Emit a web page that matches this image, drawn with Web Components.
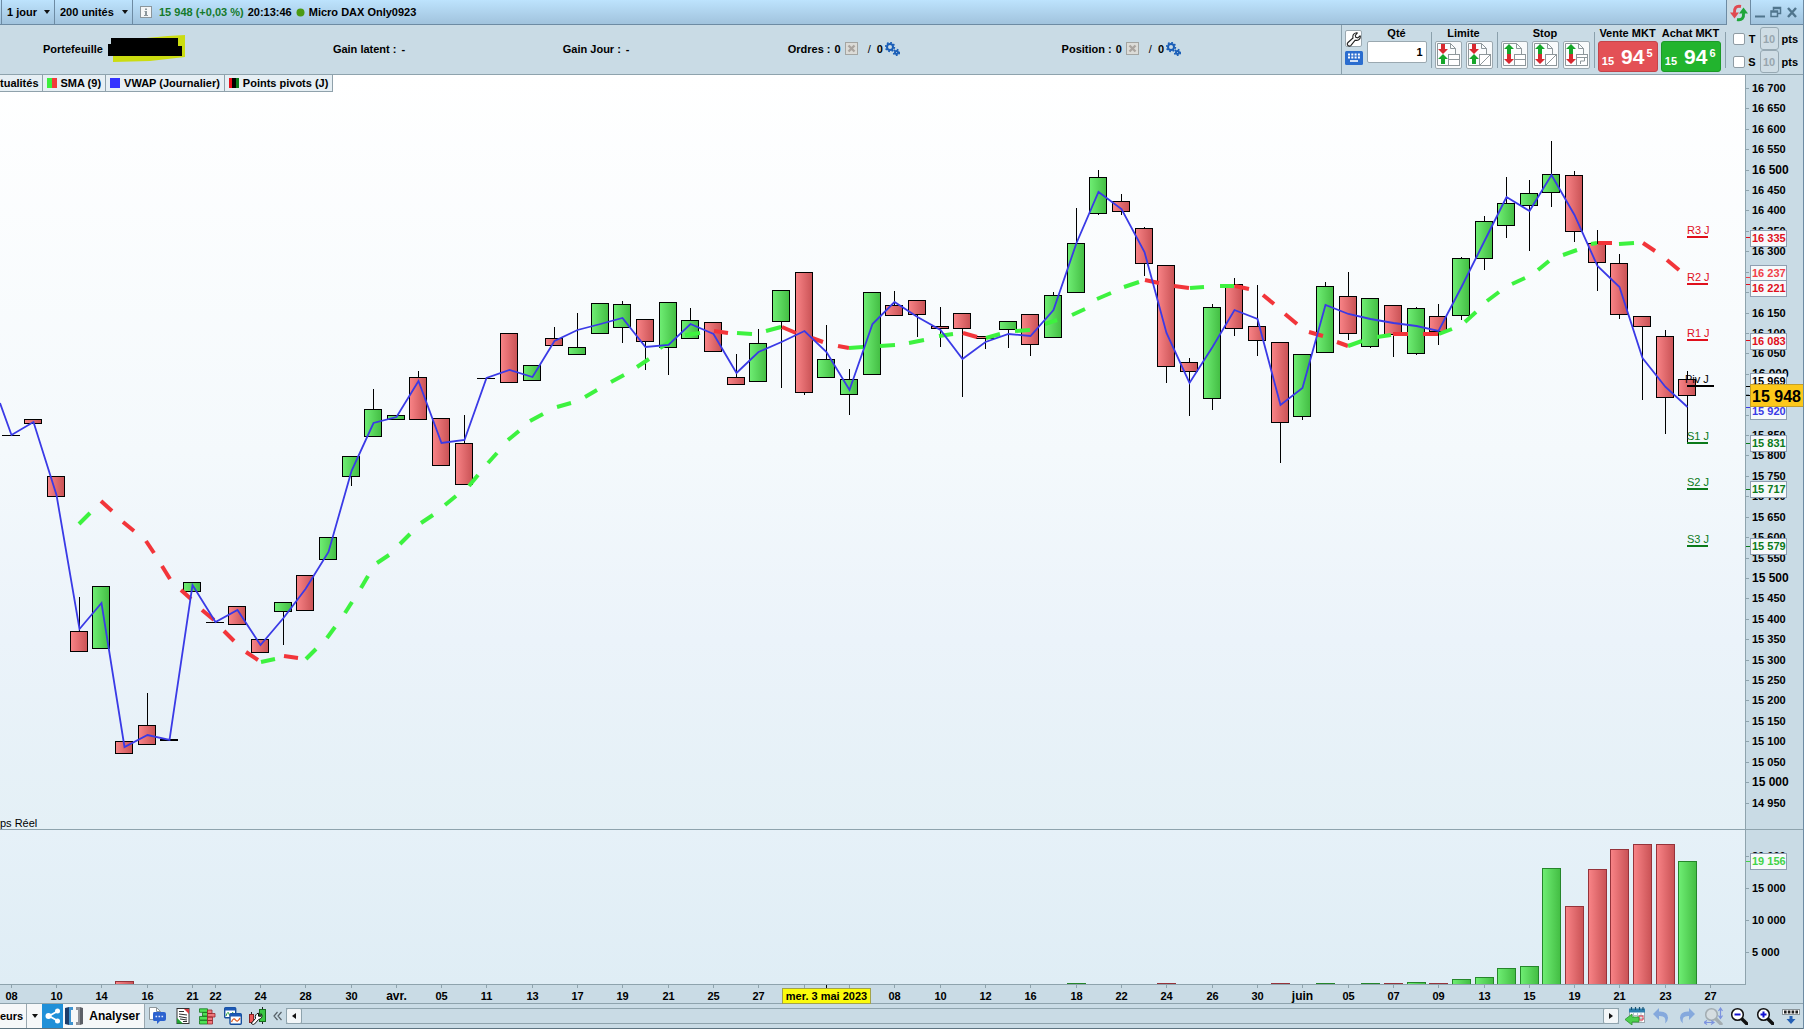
<!DOCTYPE html>
<html lang="fr">
<head>
<meta charset="utf-8">
<title>Micro DAX Only0923</title>
<style>
html,body{margin:0;height:100%}
body{font:bold 11px/14px "Liberation Sans",Arial,sans-serif;color:#000;background:#c9dbe5}
</style>
</head>
<body>
<trading-app></trading-app>
<script>
const BASE = `
*{box-sizing:border-box}
button,input,select{font:inherit;color:inherit;margin:0;padding:0}
button{background:none;border:0;display:flex;align-items:center;justify-content:center;cursor:pointer}
`;
function define(name, css, html, extra) {
  const tpl = document.createElement('template');
  tpl.innerHTML = `<style>${BASE}${css}</style>${html}`;
  customElements.define(name, class extends HTMLElement {
    constructor() {
      super();
      this.attachShadow({mode: 'open'}).append(tpl.content.cloneNode(true));
    }
    connectedCallback() { if (extra) extra(this, this.shadowRoot); }
  });
}

/* ---------- icons ---------- */
const page = '<path d="M2.5 2.5h13l5 5v17h-18z" fill="#fbfdfe" stroke="#8e979b"/><path d="M15.5 2.5v5h5" fill="none" stroke="#8e979b"/>';
const up = (x, y, c = '#16a62a') => `<path d="M${x} ${y + 10}h4v-5h3l-5-5-5 5h3z" fill="${c}"/>`;
const down = (x, y, c = '#d8282f') => `<path d="M${x} ${y}h4v5h3l-5 5-5-5h3z" fill="${c}"/>`;
const orderBox = '<rect x="13.5" y="13.5" width="11" height="11" fill="#fff" stroke="#8e979b"/>';
const gear = (cx, cy, r) => `<circle cx="${cx}" cy="${cy}" r="${r}" fill="none" stroke="#1b5fb8" stroke-width="2"/><circle cx="${cx}" cy="${cy}" r="${r + 1.4}" fill="none" stroke="#1b5fb8" stroke-width="1.6" stroke-dasharray="1.7 1.7"/>`;
const lens = (c, f) => `<path d="M11 11l6 6" stroke="${c}" stroke-width="3.4" stroke-linecap="round"/><circle cx="7.5" cy="7.5" r="5.8" fill="${f}" stroke="${c}" stroke-width="1.5"/>`;
const ICONS = {
  info: [12, 12, '<rect x=".5" y=".5" width="11" height="11" fill="#f4f6f7" stroke="#8b969c"/><path d="M5 2.5h2v1.5H5zM4.5 5H7v4h1v1H4V9h1V6h-.5z" fill="#8b969c"/>'],
  dot: [9, 9, '<circle cx="4.5" cy="4.5" r="4" fill="#4c9a12"/>'],
  refresh: [18, 18, '<path d="M11 2.5C6 1.5 4 4 4.5 9" fill="none" stroke="#e04a50" stroke-width="3"/><path d="M0 8.5h9l-4.5 6z" fill="#e04a50"/><path d="M7 15.5c5 1 7-1.5 6.5-6.5" fill="none" stroke="#1fa63a" stroke-width="3"/><path d="M9 9.5h9L13.5 3.5z" fill="#1fa63a"/>'],
  min: [12, 12, '<path d="M1 10.5h10" stroke="#50758d" stroke-width="2"/>'],
  restore: [12, 12, '<path d="M3.5 4.5v-3h7v6h-3M3.5 2.5h7" fill="none" stroke="#50758d" stroke-width="1.5"/><path d="M1 5h6.5v5.5H1zM1 6h6" fill="none" stroke="#50758d" stroke-width="1.5"/>'],
  close: [12, 12, '<path d="M2 2l8 9M10 2l-8 9" stroke="#50758d" stroke-width="2.4"/>'],
  cancel: [13, 13, '<rect x=".5" y=".5" width="12" height="12" fill="#dcdcd8" stroke="#a3a5a2"/><path d="M3.5 3.5l6 6M9.5 3.5l-6 6" stroke="#aaa5a0" stroke-width="2.4"/>'],
  gears: [15, 14, gear(5, 5, 3) + gear(11.5, 10.5, 1.5)],
  wrench: [16, 16, '<path d="M2 14.5c-1-1-1-2 0-3l5-4.5c-.6-2.5.5-5 3.5-5.3l.8.3-2 2.3.5 2 2 .5 2.2-2 .4.8c0 3-2.7 4.3-5.2 3.6L5 14.3c-1 1-2 1-3 .2z" fill="#fff" stroke="#222" stroke-width="1.1"/>'],
  keyboard: [18, 14, '<rect width="18" height="14" rx="1.5" fill="#2b6dcf"/><path d="M3 3.5h12M3 6.5h12" stroke="#fff" stroke-width="2" stroke-dasharray="2 1.3"/><path d="M5 10h8" stroke="#fff" stroke-width="1.6"/>'],
  limit1: [27, 28, page + down(6, 3) + up(6, 13) + orderBox + '<path d="M13 18.5h12" stroke="#8e979b"/>'],
  limit2: [27, 28, page + down(6, 3) + up(6, 13) + orderBox + '<path d="M14 24l10-10" stroke="#8e979b"/>'],
  stop1: [27, 28, page + up(6, 3) + down(6, 13) + orderBox + '<path d="M13 18.5h12" stroke="#8e979b"/>'],
  stop2: [27, 28, page + up(6, 3) + down(6, 13) + orderBox + '<path d="M14 24l10-10" stroke="#8e979b"/>'],
  stop3: [27, 28, page + up(6, 3) + down(6, 13) + orderBox + '<path d="M13 16.5h12M21.5 16v4h-4v3" fill="none" stroke="#8e979b"/>'],
  caret: [6, 4, '<path d="M0 0h6L3 4z" fill="#111"/>'],
  left: [4, 6, '<path d="M4 0v6L0 3z" fill="#111"/>'],
  right: [4, 6, '<path d="M0 0v6l4-3z" fill="#111"/>'],
  chev: [9, 10, '<path d="M4.5 1L1 5l3.5 4M8.5 1L5 5l3.5 4" fill="none" stroke="#555f66" stroke-width="1.2"/>'],
  share: [16, 16, '<path d="M13 3L4 8l9 5" fill="none" stroke="#fff" stroke-width="1.8"/><circle cx="12.5" cy="3" r="2.5" fill="#fff"/><circle cx="3.5" cy="8" r="3" fill="#fff"/><circle cx="12.5" cy="13" r="2.5" fill="#fff"/>'],
  brackets: [18, 18, '<path d="M0 1l4-1v18l-4-1z" fill="#1d3d6b"/><path d="M4 0h4v3H6v12h2v3H4z" fill="#3f93cf"/><path d="M18 1l-3-1v18l3-1z" fill="#5c5f66"/><path d="M15 0h-4v3h2v12h-2v3h4z" fill="#8f9299"/>'],
  chat: [17, 18, '<path d="M.5.5h7l4 4v8H.5z" fill="#fff" stroke="#8e979b"/><path d="M7.5.5v4h4" fill="none" stroke="#8e979b"/><path d="M5 5h10q2 0 2 2v5q0 2-2 2h-4l-3 3v-3H5q-1 0-1-2V7q0-2 1-2z" fill="#2c62cf"/><path d="M6.5 9.5h8" stroke="#dfe9ff" stroke-width="1.6" stroke-dasharray="1.6 1.4"/>'],
  report: [14, 16, '<rect x="1" y=".5" width="12" height="15" fill="#fff" stroke="#333"/><path d="M3 3.5h5M3 6l8 1M3 8.5l8 1.5M4 11l7 1M7 13.5h4" stroke="#333" stroke-width="1.2"/><path d="M8 1h5v5z" fill="#d9393f"/><path d="M1 10v5.5h6z" fill="#21a330"/>'],
  book: [17, 17, '<g stroke-width=".8"><path d="M.5.8h8v3.500h-8zM3.500 4.500h5V8h-5zM.5 8.500h8V12h-8zM.5 12.500h8V16h-8z" fill="#4fe055" stroke="#14771d"/><path d="M8.500 2H13v3.500H8.500zM8.500 5.500h7.500V9H8.500zM8.500 9h5v3.500h-5zM8.500 12.500h5V16h-5z" fill="#ee777b" stroke="#97252b"/></g>'],
  windows: [18, 18, '<rect x=".7" y=".7" width="11" height="10" rx="1" fill="#fff" stroke="#174e9e" stroke-width="1.4"/><path d="M1 2h10.5" stroke="#1d59b5" stroke-width="3"/><path d="M2 9q2-6 3-2t4-2" fill="none" stroke="#26a038"/><rect x="6" y="6.7" width="11.3" height="10.5" rx="1" fill="#fff" stroke="#174e9e" stroke-width="1.4"/><path d="M6 8h11" stroke="#1d59b5" stroke-width="3"/><path d="M7.5 15q2-5 4-2t4.5-2" fill="none" stroke="#dd5a20" stroke-width="1.3"/>'],
  candletool: [17, 18, '<path d="M2.5 5v12M13.5 0v17" stroke="#222"/><rect x=".5" y="7.5" width="4" height="8" fill="#e55" stroke="#822"/><rect x="10.5" y="2.5" width="6" height="12" fill="#3cc845" stroke="#176b1e"/><path d="M2.5 16l4-4.5c-.8-3 .7-5 3-5.3v3h2.5v-2.5c2 2 .7 5.3-2.3 5.7L5.5 17c-1.5 1-3 0-3-1z" fill="#fff" stroke="#111"/>'],
  calendar: [21, 18, '<rect x="4.5" y="2.5" width="15" height="13" fill="#fff" stroke="#9ba8ae"/><path d="M4 1.5h16v4H4z" fill="#2c7fae"/><path d="M6.5 0v3M10.5 0v3M14.5 0v3M18 0v3" stroke="#17506f" stroke-width="1.2"/><path d="M5 8.5h14M5 11.5h14M8.5 6v9M12.5 6v9M16 6v9" stroke="#b7c2c7"/><path d="M14 9h4v4h-4z" fill="none" stroke="#d34"/><path d="M0 12.5l7-5.5v3h7v5H7v3z" fill="#4ed04e" stroke="#2a922e" stroke-width=".8"/>'],
  undo: [16, 16, '<path d="M6 0v3.5q9-.5 9 6.5 0 3-3 5.5 2-8-6-7.5v4L0 6z" fill="#85a9dd"/>'],
  redo: [16, 16, '<path d="M10 0v3.5Q1 3 1 10q0 3 3 5.5Q2 7.5 10 8v4l6-6z" fill="#85a9dd"/>'],
  zoomfit: [19, 18, lens('#a3adb2', '#d5dde1') + '<path d="M16.5 2v8M14.5 4l2-3 2 3M14.5 8.5l2 3 2-3M1 15.5h8M3 13.5l-3 2 3 2M7 13.5l3 2-3 2" fill="none" stroke="#7c93df" stroke-width="1.2"/>'],
  zoomout: [18, 18, lens('#111', '#fff') + '<path d="M4.5 7.5h6" stroke="#1111d0" stroke-width="2"/>'],
  zoomin: [18, 18, lens('#111', '#fff') + '<path d="M4.5 7.5h6M7.5 4.5v6" stroke="#1111d0" stroke-width="2"/>'],
  dock: [18, 15, '<rect x=".5" y=".5" width="17" height="5" fill="#fff" stroke="#8a9499"/><path d="M2 3h14" stroke="#222" stroke-width="3" stroke-dasharray="2.6 1.2"/><path d="M7.5 7h3v3h3L9 15l-4.5-5h3z" fill="#2560b5"/>'],
  redacted: [78, 30, '<path d="M5 7L60 2l17-1v22l-35 4-37 1z" fill="#cbdc10"/><path d="M3 4h67v8h4v10H0V10h3z" fill="#000"/>']
};
customElements.define('ui-icon', class extends HTMLElement {
  constructor() { super(); this.attachShadow({mode: 'open'}); }
  connectedCallback() {
    const [w, h, body] = ICONS[this.getAttribute('name')];
    this.shadowRoot.innerHTML = `<style>:host{display:inline-flex;flex:none}svg{display:block}</style><svg width="${w}" height="${h}" viewBox="0 0 ${w} ${h}" aria-hidden="true">${body}</svg>`;
  }
});

/* ---------- title bar ---------- */
define('title-bar', `
:host{display:flex;height:25px;background:linear-gradient(#bde3fd,#a1c3dd);border-bottom:1px solid #6d8ba3;align-items:stretch}
.pick{display:flex;align-items:center;border-right:1px solid #6d8ba3;position:relative}
.unit{border-left:1px solid #6d8ba3;margin-left:1px}
select{appearance:none;border:0;background:transparent;padding:0 12px 0 5px;height:24px;outline:0}
.unit{width:54px}.count{width:78px}
.pick select{width:100%}
.pick ui-icon{position:absolute;right:4px;pointer-events:none}
.info{display:flex;align-items:center;flex:1;gap:4px;padding-left:7px}
.q{color:#157a2b;padding-left:3px}
.tab{background:#c9dbe5;width:25px;border:1px solid #6d8ba3;border-width:0 1px;margin-bottom:-1px}
.win{display:flex;align-items:center;gap:4px;padding:0 5px 0 3px}
.win button{width:12px;height:24px}`, `
<div class="pick unit"><select aria-label="Période"><option>1 jour</option></select><ui-icon name="caret"></ui-icon></div>
<div class="pick count"><select aria-label="Historique"><option>200 unités</option></select><ui-icon name="caret"></ui-icon></div>
<div class="info"><ui-icon name="info"></ui-icon><span class="q">15 948 (+0,03 %)</span><span>20:13:46</span><ui-icon name="dot"></ui-icon><span>Micro DAX Only0923</span></div>
<button class="tab" aria-label="Actualiser"><ui-icon name="refresh"></ui-icon></button>
<div class="win"><button aria-label="Réduire"><ui-icon name="min"></ui-icon></button><button aria-label="Restaurer"><ui-icon name="restore"></ui-icon></button><button aria-label="Fermer"><ui-icon name="close"></ui-icon></button></div>`);

/* ---------- account figures ---------- */
define('account-bar', `
:host{display:grid;flex:1;grid-template-columns:290fr 230fr 225fr 274fr 279fr;align-items:center;padding:0 0 2px 43px}
div{display:flex;align-items:center;gap:5px;white-space:nowrap}
.sl{font-weight:normal;padding:0 2px 0 6px}
.g{gap:4px}
.g button:last-child{margin-left:-2px}
button{height:16px}`, `
<div><span>Portefeuille</span><ui-icon name="redacted"></ui-icon></div>
<div><span>Gain latent :</span><span>-</span></div>
<div><span>Gain Jour :</span><span>-</span></div>
<div class="g"><span>Ordres :</span><span>0</span><button aria-label="Annuler les ordres"><ui-icon name="cancel"></ui-icon></button><span class="sl">/</span><span>0</span><button aria-label="Réglages des ordres"><ui-icon name="gears"></ui-icon></button></div>
<div class="g"><span>Position :</span><span>0</span><button aria-label="Fermer la position"><ui-icon name="cancel"></ui-icon></button><span class="sl">/</span><span>0</span><button aria-label="Réglages de la position"><ui-icon name="gears"></ui-icon></button></div>`);

/* ---------- order ticket ---------- */
define('price-button', `
:host{display:flex;flex-direction:column;align-items:center;width:60px;gap:1px;white-space:nowrap}
button{width:60px;height:31px;border-radius:3px;color:#fff;background:var(--c);border:1px solid var(--b);display:flex;align-items:flex-start;justify-content:flex-end;gap:2px;padding-right:4px}
.s{font-size:11px;line-height:14px;align-self:flex-end;padding:0 5px 3px 0}
.b{font-size:21px;line-height:30px}
.p{font-size:11px;line-height:14px;padding-top:4px}`, `
<label for="b"><slot></slot></label><button id="b"><span class="s">15</span><span class="b">94</span><span class="p"></span></button>`,
(h, r) => { r.querySelector('.p').textContent = h.getAttribute('pip'); });

define('order-ticket', `
:host{display:flex;height:49px;border-left:1px solid #8aa0ac;padding:1px 5px 0 3px;gap:4px}
.sep{width:1px;background:#8aa0ac;margin:6px -1px 6px 0}
.tools{display:flex;flex-direction:column;gap:4px;width:18px;align-items:center;padding-top:4px}
.tools button{height:14px;border-radius:2px}
.tools button:first-child{width:17px;height:17px;background:#fff;border:1px solid #9aa8b0}
.grp{display:flex;flex-direction:column;align-items:center;gap:1px}
.row{display:flex;gap:4px}
.row button{width:27px;height:28px;background:#f8fafb;border:1px solid #9aa8b0;border-radius:2px}
.qty{width:60px;height:22px;border:1px solid #9aa8b0;border-radius:2px;background:#fff;text-align:right;padding-right:3px}
.px{display:flex;gap:3px}
.lim{display:grid;grid-template-columns:12px 9px 19px auto;column-gap:3px;align-items:center;grid-auto-rows:23px;padding-left:4px;margin-top:1px}
.lim input[type=checkbox]{appearance:none;width:12px;height:12px;background:#fff;border:1px solid #8f9ca4;border-radius:2px}
.lim label{text-align:center}
.lim .n{width:19px;height:23px;border:1px solid #97a9b3;border-radius:3px;background:#cfdde5;color:#98a6ae;text-align:center}`, `
<div class="tools"><button aria-label="Configurer"><ui-icon name="wrench"></ui-icon></button><button aria-label="Clavier"><ui-icon name="keyboard"></ui-icon></button></div>
<div class="grp"><label for="q">Qté</label><input class="qty" id="q" value="1"></div>
<div class="sep"></div>
<div class="grp"><span>Limite</span><div class="row"><button aria-label="Limite"><ui-icon name="limit1"></ui-icon></button><button aria-label="Limite graphique"><ui-icon name="limit2"></ui-icon></button></div></div>
<div class="sep"></div>
<div class="grp"><span>Stop</span><div class="row"><button aria-label="Stop"><ui-icon name="stop1"></ui-icon></button><button aria-label="Stop graphique"><ui-icon name="stop2"></ui-icon></button><button aria-label="Stop suiveur"><ui-icon name="stop3"></ui-icon></button></div></div>
<div class="sep"></div>
<div class="px"><price-button pip="5" style="--c:#e35156;--b:#c4444a">Vente MKT</price-button><price-button pip="6" style="--c:#22b42e;--b:#1b9a27">Achat MKT</price-button></div>
<div class="sep"></div>
<div class="lim"><input type="checkbox" id="t"><label for="t">T</label><input class="n" id="tn" value="10" disabled><label for="tn">pts</label>
<input type="checkbox" id="s"><label for="s">S</label><input class="n" id="sn" value="10" disabled><label for="sn">pts</label></div>`);

/* ---------- indicator legend ---------- */
define('indicator-legend', `
:host{display:flex;height:17px;position:relative}
span{display:flex;align-items:center;gap:4px;background:#e6eff4;border:1px solid #8fa1ab;border-width:0 1px 1px 0;padding:0 4px;white-space:nowrap}
span:first-of-type{padding:0 3px 0 0}
i{width:10px;height:10px}
.sma{background:linear-gradient(90deg,#3dee3d 50%,#f23a3a 50%)}
.vw{background:#3333ff}
.pp{background:linear-gradient(90deg,#e8101a 30%,#000 30% 70%,#0b7a1a 70%)}`, `
<span>tualités</span><span><i class="sma"></i>SMA (9)</span><span><i class="vw"></i>VWAP (Journalier)</span><span><i class="pp"></i>Points pivots (J)</span>`);

/* ---------- chart data ---------- */
const REF_W = 1803, PLOT_W = 1745, PRICE_TOP = 75, PRICE_H = 754, VOL_TOP = 829, VOL_H = 155;
const barX = i => Math.floor(11.1 + i * 22.66);
/* colour, body top, body bottom, high, low */
const CANDLES = `k 435 435|r 419 423|r 476 496|r 631 651 597|g 586 648|r 741 753|r 725 744 693|K 739 740|g 582 591|k 622 622|r 606 624|r 639 652|g 602 611 602 645|r 575 610|g 537 559|g 456 476 456 486|g 409 436 389|g 415 419|r 377 419 371|r 418 465|r 443 484 415|k 378 378|r 333 382|g 365 380|r 338 345 327|g 347 354 313|g 303 333|g 304 327 301 343|r 319 341 319 370|g 302 347 302 375|g 320 338 308|r 322 351|r 377 384 354|g 343 381 329|g 290 321 290 388|r 272 392 272 395|g 359 377 325|g 379 394 369 415|g 292 374|r 305 315 291|r 300 314 300 337|r 326 328 307 347|r 313 328 313 397|r 336 338 336 349|g 321 329 321 348|r 314 344 314 356|g 295 337 292|g 243 292 208|g 177 213 170 215|r 201 211 194 215|r 228 263 227 276|r 265 366 265 383|r 362 371 358 416|g 307 398 304 410|r 284 328 278 336|r 326 340 285 356|r 342 422 342 463|g 354 416 354 420|g 286 352 282|r 296 333 272 340|g 298 346 298 348|r 305 334 305 357|g 308 353 307 355|r 316 331 304 345|g 258 315 257 320|g 221 258 216 270|g 203 225 177 238|g 193 205 180 251|g 174 192 141 207|r 175 231 171 242|r 243 262 230 291|r 263 314 254 319|r 316 326 316 400|r 336 397 330 434|r 379 395 371 443`.split('|').map(s => s.split(' '));
const VWAP = [435,422,495,629,603,747,735,740,585,622,610,645,618,589,552,471,423,417,381,443,440,378,370,377,341,330,324,318,347,345,324,334,373,352,342,331,352,390,324,302,317,330,359,342,334,336,310,243,192,209,252,333,383,347,310,319,405,388,305,314,319,323,326,331,287,241,197,211,175,215,266,287,358,387,407];
/* dashes: colour x1 y1 x2 y2 */
const SMA = `g 79 524 90 513,r 101 501 112 511,r 123 522 134 531,r 146 541 154 553,r 162 566 170 579,r 181 590 191 599,r 202 610 214 620,r 224 631 234 641,r 246 652 258 660,g 261 662 275 659,r 284 656 298 658,g 306 659 316 649,g 327 638 335 627,g 345 613 352 602,g 361 588 368 576,g 377 563 389 555,g 400 544 410 534,g 421 523 433 515,g 445 505 456 496,g 469 486 478 475,g 488 463 497 453,g 508 440 519 431,g 530 421 543 414,g 557 407 571 403,g 585 397 597 390,g 611 382 624 375,g 637 367 649 359,g 660 348 671 341,g 685 335 700 333,r 714 331 728 333,g 737 333 752 334,g 766 331 781 327,r 782 327 796 333,r 812 338 823 342,r 838 346 849 348,g 849 348 863 347,g 880 346 895 345,g 909 343 924 340,g 939 336 953 334,r 963 333 977 337,g 986 338 1000 334,g 1015 331 1030 330,g 1045 324 1057 320,g 1072 315 1085 309,g 1097 299 1111 293,g 1124 287 1139 282,r 1145 280 1159 283,r 1174 286 1189 288,g 1190 288 1204 287,g 1220 286 1234 286,r 1235 286 1249 289,r 1263 295 1274 304,r 1285 314 1297 324,r 1309 332 1323 336,r 1337 342 1348 346,g 1348 346 1362 341,g 1377 337 1391 335,r 1393 334 1408 334,r 1423 334 1438 334,g 1439 334 1452 329,g 1465 322 1476 312,g 1487 301 1499 292,g 1512 284 1525 278,g 1538 270 1549 261,g 1563 255 1577 250,g 1591 244 1597 243,r 1598 243 1612 243,g 1619 244 1634 243,r 1643 243 1655 251,r 1667 260 1679 270`.split(',').map(s => s.split(' '));
const PIVOTS = [['R3 J', 237, '#e0101c'], ['R2 J', 284, '#e0101c'], ['R1 J', 340, '#e0101c'], ['Piv J', 386, '#000'], ['S1 J', 443, '#0b7a1a'], ['S2 J', 489, '#0b7a1a'], ['S3 J', 546, '#0b7a1a']];
/* text, box top, tick, colour */
const BADGES = [['16 335', 230, 237, '#e0101c'], ['16 237', 265, 277, '#f04048'], ['16 221', 280, 284, '#e0101c'], ['16 083', 333, 340, '#e0101c'], ['15 969', 373, 386, '#000'], ['15 920', 403, 407, '#3a3ae6'], ['15 831', 435, 443, '#0b7a1a'], ['15 717', 481, 489, '#0b7a1a'], ['15 579', 538, 546, '#0b7a1a']];
const VOLUMES = {5: ['r', 981], 47: ['g', 983], 51: ['r', 983], 56: ['r', 983], 58: ['g', 983], 60: ['g', 983], 61: ['r', 983], 62: ['g', 982], 63: ['r', 983], 64: ['g', 979], 65: ['g', 977], 66: ['g', 968], 67: ['g', 966], 68: ['g', 868], 69: ['r', 906], 70: ['r', 869], 71: ['r', 849], 72: ['r', 844], 73: ['r', 844], 74: ['g', 861]};
const DATES = {0: '08', 2: '10', 4: '14', 6: '16', 8: '21', 9: '22', 11: '24', 13: '28', 15: '30', 17: 'avr.', 19: '05', 21: '11', 23: '13', 25: '17', 27: '19', 29: '21', 31: '25', 33: '27', 39: '08', 41: '10', 43: '12', 45: '16', 47: '18', 49: '22', 51: '24', 53: '26', 55: '30', 57: 'juin', 59: '05', 61: '07', 63: '09', 65: '13', 67: '15', 69: '19', 71: '21', 73: '23', 75: '27'};

const GRADS = `<defs><linearGradient id="g"><stop stop-color="#6fee74"/><stop offset="1" stop-color="#43bd43"/></linearGradient><linearGradient id="r"><stop stop-color="#f98487"/><stop offset="1" stop-color="#c95255"/></linearGradient></defs>`;
const PANE = `:host{display:block;position:relative;overflow:hidden;min-height:0}
svg{position:absolute;inset:0;width:100%;height:100%;display:block}
text{white-space:pre}
.crisp{shape-rendering:crispEdges}`;

/* A pane redraws itself for its own box: bars stay anchored to the price axis on the right. */
class ChartPane extends HTMLElement {
  constructor() { super(); this.attachShadow({mode: 'open'}); }
  connectedCallback() {
    this.shadowRoot.innerHTML = `<style>${PANE}</style><svg role="img"></svg><slot></slot>`;
    this.svg = this.shadowRoot.querySelector('svg');
    this.paint();
    new ResizeObserver(() => this.paint()).observe(this);
  }
  paint() {
    const w = this.clientWidth, h = this.clientHeight;
    if (!w || !h) return;
    this.svg.innerHTML = GRADS + this.draw(w, h, w - REF_W);
  }
}
const line = (x1, y1, x2, y2, c, w = 1) => `<line x1="${x1}" y1="${y1}" x2="${x2}" y2="${y2}" stroke="${c}" stroke-width="${w}"/>`;
const badge = (x, y, tick, t, c) => line(x, tick + .5, x + 4, tick + .5, c) +
  `<rect x="${x + 4.5}" y="${y + .5}" width="36" height="16" fill="#f6f9fb" stroke="#8f9fb2"/><text x="${x + 6}" y="${y + 12}" fill="${c}">${t}</text>`;

customElements.define('price-pane', class extends ChartPane {
  draw(w, h, dx) {
    const k = h / PRICE_H, Y = y => Math.round((y - PRICE_TOP) * k), ax = PLOT_W + dx;
    let s = `<rect class="crisp" x="${ax}" width="58" height="${h}" fill="#c9dbe5"/>`;
    CANDLES.forEach(([c, t, b, hi = t, lo = b], i) => {
      const x = barX(i) + dx, y = Y(t), bh = Y(b) - y;
      if (c === 'k') { s += line(x - 9, y + .5, x + 9, y + .5, '#000'); return; }
      if (c === 'K') { s += line(x - 9, y + 1, x + 9, y + 1, '#000', 2); return; }
      if (hi !== t || lo !== b) s += line(x + .5, Y(hi), x + .5, Y(lo), '#000');
      s += `<rect x="${x - 8.5}" y="${y + .5}" width="17" height="${bh}" fill="url(#${c})" stroke="#000"/>`;
    });
    SMA.forEach(([c, a, b, d, e]) => { s += line(+a + dx, Y(b), +d + dx, Y(e), c === 'g' ? '#3df23f' : '#f2353a', 4); });
    s += `<polyline fill="none" stroke="#3a3ae6" stroke-width="1.8" points="${dx},${Y(403)} ${VWAP.map((y, i) => barX(i) + .5 + dx + ',' + Y(y)).join(' ')}"/>`;
    PIVOTS.forEach(([t, y, c]) => {
      const piv = t[0] === 'P', x = 1687 + dx;
      s += line(x, Y(y), x + (piv ? 27 : 21), Y(y), c, 2) + `<text x="${piv ? x - 2 : x}" y="${Y(y) - 3}" font-size="11" font-weight="normal" fill="${c}">${t}</text>`;
    });
    s += line(ax + .5, 0, ax + .5, h, '#8ea3ad');
    for (let p = 16700; p >= 14950; p -= 50) {
      const y = Y(88 + (16700 - p) * .4083), big = p % 500 === 0, t = String(p);
      s += line(ax + 1, y + .5, ax + 4, y + .5, '#8ea3ad');
      if (p === 16250 || p === 16200 || p === 15900) continue;
      s += `<text x="${ax + 7}" y="${y + 4}" font-size="${big ? 12 : 11}">${t.slice(0, 2)} ${t.slice(2)}</text>`;
    }
    BADGES.forEach(([t, y, tick, c]) => { s += badge(ax + 1, Y(y), Y(tick), t, c); });
    const gy = Y(384);
    s += line(ax + 1, gy + 11.5, ax + 5, gy + 11.5, '#000') +
      `<rect x="${ax + 5.5}" y="${gy + .5}" width="53" height="22" fill="#fcc81b" stroke="#c5a029"/><text x="${ax + 7}" y="${gy + 18}" font-size="16">15 948</text>`;
    return s + `<text x="0" y="${h - 2}" font-weight="normal">ps Réel</text>`;
  }
});

customElements.define('volume-pane', class extends ChartPane {
  draw(w, h, dx) {
    const k = h / VOL_H, Y = y => Math.round((y - VOL_TOP) * k), ax = PLOT_W + dx;
    let s = `<rect class="crisp" x="${ax}" width="58" height="${h}" fill="#c9dbe5"/>`;
    for (const [i, [c, y]] of Object.entries(VOLUMES))
      s += `<rect x="${barX(+i) - 8.5 + dx}" y="${Y(y) + .5}" width="18" height="${h - Y(y)}" fill="url(#${c})" stroke="${c === 'g' ? '#25862b' : '#96333a'}"/>`;
    s += line(0, .5, w, .5, '#8ea3ad') + line(ax + .5, 0, ax + .5, h, '#8ea3ad');
    [['20 000', 856], ['15 000', 888], ['10 000', 920], ['5 000', 952]].forEach(([t, y]) => {
      s += line(ax + 1, Y(y) + .5, ax + 4, Y(y) + .5, '#8ea3ad') + `<text x="${ax + 7}" y="${Y(y) + 4}">${t}</text>`;
    });
    return s + badge(ax + 1, Y(853), Y(861), '19 156', '#43d348');
  }
});

customElements.define('time-axis', class extends ChartPane {
  draw(w, h, dx) {
    let s = line(0, .5, PLOT_W + dx + 1, .5, '#8ea3ad') + line(0, h - .5, w, h - .5, '#8ea3ad');
    for (const [i, t] of Object.entries(DATES)) {
      const x = barX(+i) + .5 + dx;
      s += line(x, 1, x, 4, '#8ea3ad') + `<text x="${x}" y="16" text-anchor="middle" font-size="${t.length > 2 ? 12 : 11}">${t}</text>`;
    }
    s += line(804.5 + dx, 1, 804.5 + dx, 4, '#8ea3ad') + line(826.5 + dx, 1, 826.5 + dx, 4, '#000') + line(849.5 + dx, 1, 849.5 + dx, 4, '#8ea3ad');
    return s + `<rect x="${782.5 + dx}" y="4.5" width="88" height="15" fill="#fbfb0c" stroke="#a3a34a"/><text x="${826.5 + dx}" y="16" text-anchor="middle">mer. 3 mai 2023</text>`;
  }
});

/* ---------- bottom toolbar ---------- */
define('bottom-bar', `
:host{display:flex;height:25px;align-items:stretch;border-bottom:1px solid #5d7380}
.w{background:#f6f8f9}
.e{padding-right:3px;border-right:1px solid #9aa8b0}
.c{width:15px}
.sh{width:21px;background:#2090d8}
.an{font-size:12px;gap:6px;padding:0 4px 0 2px;border-right:1px solid #9aa8b0}
.tools{display:flex;gap:7px;padding:0 3px 0 4px}
.tools button{width:18px}
.ch{width:16px}
.track{flex:1;display:flex;justify-content:space-between;margin:4px 0;border:1px solid #8ea3ad;border-width:1px 0}
.track button{width:16px;margin:-1px 0;background:#f2f6f8;border:1px solid #8ea3ad;border-radius:2px}
.r{display:flex;gap:4px;padding:0 1px 0 5px}
.r button{width:22px}`, `
<button class="w e">eurs</button><button class="w c" aria-label="Plus"><ui-icon name="caret"></ui-icon></button>
<button class="sh" aria-label="Partager"><ui-icon name="share"></ui-icon></button>
<button class="w an"><ui-icon name="brackets"></ui-icon>Analyser</button>
<div class="tools"><button aria-label="Messages"><ui-icon name="chat"></ui-icon></button><button aria-label="Rapport"><ui-icon name="report"></ui-icon></button><button aria-label="Carnet"><ui-icon name="book"></ui-icon></button><button aria-label="Graphiques"><ui-icon name="windows"></ui-icon></button><button aria-label="Outils"><ui-icon name="candletool"></ui-icon></button></div>
<button class="ch" aria-label="Replier"><ui-icon name="chev"></ui-icon></button>
<div class="track"><button aria-label="Défiler à gauche"><ui-icon name="left"></ui-icon></button><button aria-label="Défiler à droite"><ui-icon name="right"></ui-icon></button></div>
<div class="r"><button aria-label="Calendrier"><ui-icon name="calendar"></ui-icon></button><button aria-label="Annuler"><ui-icon name="undo"></ui-icon></button><button aria-label="Rétablir"><ui-icon name="redo"></ui-icon></button><button aria-label="Zoom automatique"><ui-icon name="zoomfit"></ui-icon></button><button aria-label="Zoom arrière"><ui-icon name="zoomout"></ui-icon></button><button aria-label="Zoom avant"><ui-icon name="zoomin"></ui-icon></button><button aria-label="Ancrer"><ui-icon name="dock"></ui-icon></button></div>`);

define('trading-app', `
:host{display:flex;flex-direction:column;height:100vh;border-right:1px solid #6d8ba3}
.head{display:flex;height:50px;border-bottom:1px solid #8ea3ad}
price-pane{flex:754 1 0;background:linear-gradient(#fff,#f4f9fc 50%,#ebf3fa 75%,#e4f0f6)}
volume-pane{flex:155 1 0;background:linear-gradient(#e6f1f8,#dfedf5)}
time-axis{height:20px}`, `
<title-bar></title-bar>
<div class="head"><account-bar></account-bar><order-ticket></order-ticket></div>
<price-pane><indicator-legend></indicator-legend></price-pane>
<volume-pane></volume-pane>
<time-axis></time-axis>
<bottom-bar></bottom-bar>`);
</script>
</body>
</html>
